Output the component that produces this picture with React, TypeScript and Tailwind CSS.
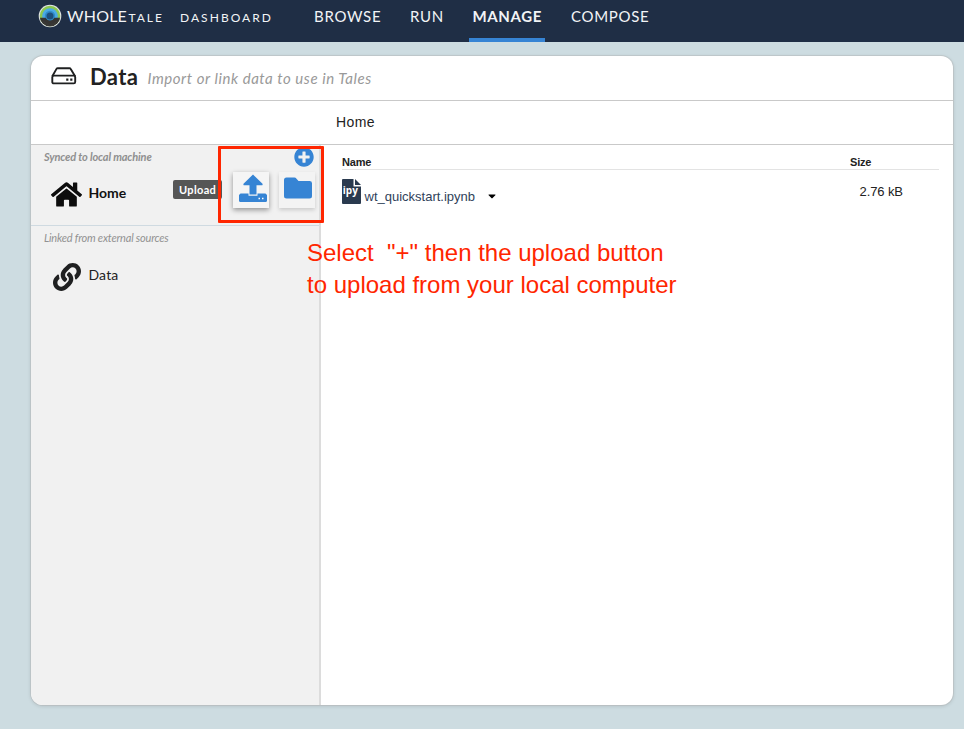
import React from 'react';
import { FaHome, FaLink, FaPlusCircle, FaCaretDown } from 'react-icons/fa';

function Logo() {
  return (
    <svg className="ml-[38px] mt-[4px] h-6 w-6 shrink-0" viewBox="0 0 24 24">
      <defs>
        <clipPath id="disc"><circle cx="12" cy="12" r="10.3" /></clipPath>
      </defs>
      <circle cx="12" cy="12" r="11.3" fill="#dfe3e4" />
      <g clipPath="url(#disc)">
        <rect width="24" height="24" fill="#8cc751" />
        <circle cx="12" cy="12" r="7.8" fill="#4aa9e6" />
        <circle cx="12" cy="12" r="5.2" fill="#2f8cc9" />
        <path d="M0 13.800H7.500Q9 16.500 12 16.500T16.500 13.800H24V24H0z" fill="#353432" />
        <circle cx="12" cy="12" r="3.500" fill="#1d4f7c" />
        <path d="M2.500 16.200 7 17.500 12 21.500 17 17.500 21.500 16.200 18 21.500 12 24 6 21.500z" fill="#393835" />
      </g>
    </svg>
  );
}

function DriveIcon() {
  return (
    <svg className="ml-5 mt-[11px] h-[18px] w-[26px] shrink-0" viewBox="0 0 26 18" fill="none" stroke="#1f2021" strokeWidth="1.9" strokeLinejoin="round">
      <path d="M1.300 9.200 5.500 1.900Q5.900 1.200 6.800 1.200h11.600q.9 0 1.300.7l4.400 7.300" />
      <rect x="1.300" y="8.600" width="22.900" height="7.800" rx="1.500" />
      <path d="M15.200 12.600h2.200M19.200 12.600h2.200" strokeWidth="2.200" />
    </svg>
  );
}

function NavItem({ label, className, active = false }: { label: string; className: string; active?: boolean }) {
  return (
    <div className={`relative h-[42px] whitespace-nowrap pt-[6px] text-[15px] leading-5 text-[#f2f4f6] ${className}`}>
      {label}
      {active && <span className="absolute bottom-0 left-[-4px] h-1 w-[76px] bg-[#3684d4]" />}
    </div>
  );
}

function Sidebar() {
  return (
    <aside className="relative w-[290px] shrink-0 border-r-2 border-[#dcdcdc] bg-[#f1f1f1]">
      <section className="h-[81px] border-b border-[#cfdae1]">
        <div className="flex h-[27px] justify-between">
          <p className="ml-[13px] mt-[5px] whitespace-nowrap text-[11px] font-bold italic leading-[14px] tracking-[-0.14px] text-[#8f8f8f]">Synced to local machine</p>
          <FaPlusCircle className="mr-[5px] mt-[2px] h-5 w-5 text-[#3684d4]" />
        </div>
        <div className="flex">
          <FaHome className="ml-5 mt-[8px] h-[29px] w-[31px] text-[#0d0d0d]" />
          <span className="ml-[6.500px] mt-[11px] w-[84.500px] text-[14px] font-bold leading-5 text-[#111]">Home</span>
          <span className="mt-[8px] h-[19px] w-[49px] rounded-[2px] bg-[#565656] pl-[6px] text-[11px] font-bold leading-[20px] text-white"><span className="tracking-[0.35px]">Upload</span></span>
          <button className="ml-[11px] flex h-9 w-9 items-center justify-center bg-[#f5f5f5] shadow-[0_2px_5px_rgba(0,0,0,0.4)]">
            <svg className="mb-[4px] ml-[3px] h-[30px] w-7" viewBox="0 0 28 30" fill="#3684d4">
              <path d="M1.500 20.500H26.500L28 22V27.500Q28 29 26.500 29H1.500Q0 29 0 27.500V22z" />
              <path d="M9.500 19H18.500V22.800H9.500z" fill="#f5f5f5" />
              <path d="M14 1.500 23.500 10.800Q24 12.300 22.500 12.300H17.500V21.500H10.500V12.300H5.500Q4 12.300 4.500 10.800z" />
              <path d="M19.500 25.500h1.500M23 25.500h1.500" stroke="#fff" strokeWidth="1.500" />
            </svg>
          </button>
          <button className="ml-[10px] flex h-9 w-9 items-center justify-center bg-[#f3f3f3] shadow-[0_2px_4px_rgba(0,0,0,0.16)]">
            <svg className="mb-[4px] ml-[2px] h-[22px] w-[28px]" viewBox="0 0 28 22" fill="#3684d4">
              <path d="M0 3Q0 .5 2.500 .5H10.500Q11.500 .5 12.500 1.700L14.500 4H25.500Q28 4 28 6.200V19Q28 21.500 25.500 21.500H2.500Q0 21.500 0 19z" />
            </svg>
          </button>
        </div>
      </section>
      <section>
        <p className="ml-[13px] whitespace-nowrap pt-[5px] text-[11px] italic leading-[14px] tracking-[-0.19px] text-[#929292]">Linked from external sources</p>
        <div className="mt-[17px] flex">
          <FaLink className="ml-[21.500px] mt-[0.5px] h-7 w-7 text-[#1f2021]" />
          <span className="ml-[8px] mt-[3px] text-[14px] leading-5 tracking-[0.15px] text-[#222]">Data</span>
        </div>
      </section>
      <div className="absolute left-[187px] top-[1px] h-[77px] w-[106px] rounded-[1px] border-[3px] border-[#ff2600]" />
    </aside>
  );
}

function FileList() {
  return (
    <main className="relative grow pl-[21px] pr-[14px] font-['Liberation_Sans',Arial,sans-serif] text-[#222]">
      <div className="flex h-[25px] border-b border-[#e3e3e3] pt-[11px] text-[11px] font-bold leading-[13px] tracking-[-0.2px]">
        <span className="w-[508px]">Name</span><span>Size</span>
      </div>
      <div className="flex">
        <svg className="mt-[9px] h-[25px] w-[19px] shrink-0" viewBox="0 0 19 25">
          <path d="M1 0H11.500V7.500H19V24Q19 25 18 25H1Q0 25 0 24V1Q0 0 1 0z" fill="#2a3a4f" />
          <path d="M13 0 19 6H13z" fill="#2a3a4f" />
          <text x="0.800" y="15.200" fill="white" fontSize="10" fontWeight="700" fontFamily="Open Sans, sans-serif">ipy</text>
        </svg>
        <span className="ml-[3.500px] mt-[19px] w-[123.500px] whitespace-nowrap text-[13px] leading-4 text-[#30425a]">wt_quickstart.ipynb</span>
        <FaCaretDown className="mt-[20px] h-3 w-[8px] text-black" />
        <span className="ml-[363.500px] mt-[14px] whitespace-nowrap text-[13px] leading-4 tracking-[-0.1px]">2.76 kB</span>
      </div>
      <div className="absolute left-[-14px] top-[92px] whitespace-pre text-[24px] leading-8 text-[#ff2600]">
        <div>{'Select  "+" then the upload button'}</div>
        <div>to upload from your local computer</div>
      </div>
    </main>
  );
}

export default function App() {
  return (
    <div className="h-[729px] w-[964px] overflow-hidden bg-[#cddce1] font-['Lato',sans-serif]">
      <header className="flex h-[42px] bg-[#1f2e45]">
        <Logo />
        <div className="ml-[5px] flex w-[247px] items-baseline whitespace-nowrap pt-[6px] text-[#f2f4f6]">
          <span className="w-[61.500px] text-[16px] leading-5 tracking-[0.2px]">WHOLE</span>
          <span className="w-[51.500px] text-[12px] leading-5 tracking-[2px]">TALE</span>
          <span className="text-[12px] leading-5 tracking-[2.05px]">DASHBOARD</span>
        </div>
        <NavItem label="BROWSE" className="w-[96px] tracking-[0.7px]" />
        <NavItem label="RUN" className="w-[62.500px] tracking-[0.7px]" />
        <NavItem label="MANAGE" className="w-[98.500px] font-bold tracking-[0.6px]" active />
        <NavItem label="COMPOSE" className="tracking-[0.7px]" />
      </header>
      <div className="ml-[31px] mt-[14px] flex h-[649px] w-[922px] flex-col overflow-hidden rounded-[12px] bg-white shadow-[0_0_0_1px_rgba(180,180,180,0.4),0_1px_4px_rgba(0,0,0,0.14)]">
        <div className="flex h-[45px] shrink-0 border-b border-[#c9c9c9]">
          <DriveIcon />
          <h1 className="ml-[13px] mt-[7px] w-[57.500px] text-[22px] font-bold leading-[28px] tracking-[0.4px] text-[#222]">Data</h1>
          <p className="mt-[12px] whitespace-nowrap text-[15px] italic leading-5 tracking-[0.55px] text-[#999]">Import or link data to use in Tales</p>
        </div>
        <div className="h-11 shrink-0 border-b border-[#c9c9c9] pl-[305px] pt-[11px] font-['Liberation_Sans',Arial,sans-serif] text-[14px] leading-5 text-[#222]"><span className="tracking-[0.4px]">Home</span></div>
        <div className="flex grow">
          <Sidebar />
          <FileList />
        </div>
      </div>
    </div>
  );
}
